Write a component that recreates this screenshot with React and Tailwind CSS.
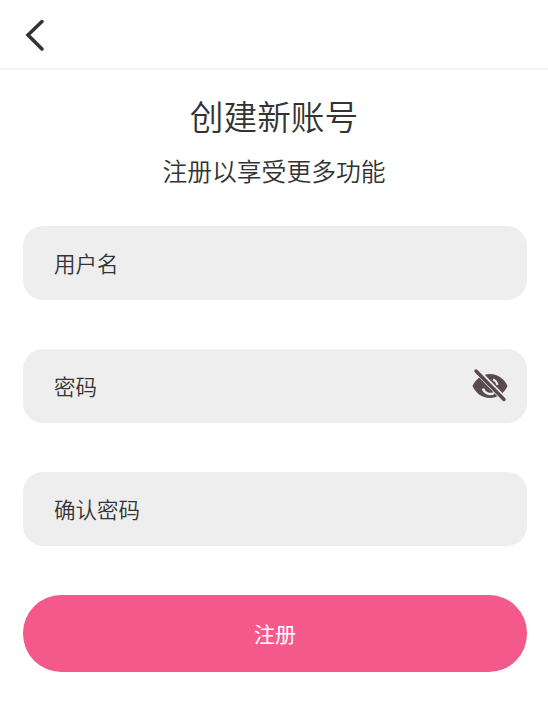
const Field = ({ label, children }) => (
  <div className="h-[74px] rounded-[20px] bg-[#eeeeee] flex items-center justify-between pl-[31px] pr-[19px]">
    <span className="text-[21.5px] text-[#333333] font-[350]">{label}</span>
    {children}
  </div>
);

const EyeOff = () => (
  <svg width="36" height="36" viewBox="0 0 36 36">
    <path
      fill="#584a4f"
      d="M18 6C10 6 3.500 11 0.500 18 3.500 25 10 30 18 30S32.500 25 35.500 18C32.500 11 26 6 18 6Z"
    />
    <path d="M11 20.500A7.500 7.500 0 0 0 22 25" fill="none" stroke="#eeeeee" strokeWidth="2.500" />
    <path d="M21 11.500A7.500 7.500 0 0 1 25.500 17" fill="none" stroke="#eeeeee" strokeWidth="2" />
    <path d="M4.500 2.500L33 32" stroke="#eeeeee" strokeWidth="6" />
    <path d="M4 3L32 31.500" stroke="#584a4f" strokeWidth="3.500" strokeLinecap="round" />
  </svg>
);

export default function App() {
  return (
    <div className="w-[548px] h-[704px] bg-white font-['Noto_Sans_CJK_SC','Noto_Sans',sans-serif] overflow-hidden">
      {/* Header */}
      <header className="h-[70px] border-b-2 border-[#f5f5f5] flex items-center pl-[24px] pt-[2px]">
        <svg width="24" height="34" viewBox="0 0 24 34" fill="none">
          <path d="M18 3.500L4 17L18 31" stroke="#333333" strokeWidth="3.500" strokeLinecap="round" />
        </svg>
      </header>

      <h1 className="mt-[21px] text-center text-[33.700px] leading-[50px] text-[#333333] font-[350]">创建新账号</h1>
      <p className="mt-[11px] text-center text-[24.800px] leading-[36px] text-[#333333] font-[350]">注册以享受更多功能</p>

      <div className="ml-[23px] mr-[21px] mt-[38px] flex flex-col gap-[49px]">
        <Field label="用户名" />
        <Field label="密码">
          <EyeOff />
        </Field>
        <Field label="确认密码" />
        <button className="h-[77px] rounded-[38px] bg-[#f4598b] text-white text-[21px]">注册</button>
      </div>
    </div>
  );
}
